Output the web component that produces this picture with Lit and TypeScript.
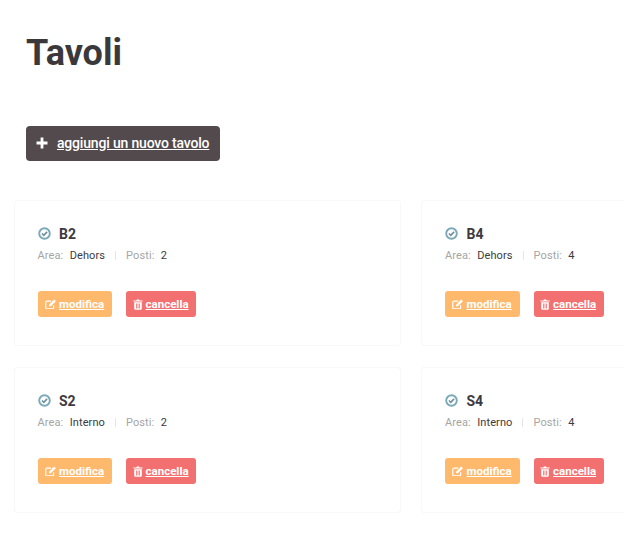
import { LitElement, html, css, svg } from "lit";
import { customElement } from "lit/decorators.js";

const tables = [
  { name: "B2", area: "Dehors", seats: 2 },
  { name: "B4", area: "Dehors", seats: 4 },
  { name: "S2", area: "Interno", seats: 2 },
  { name: "S4", area: "Interno", seats: 4 },
];

const checkIcon = svg`<svg class="check" viewBox="0 0 13 13" width="13" height="13" fill="none"><circle cx="6.5" cy="6.5" r="5.3" stroke="#7aa9b8" stroke-width="1.9"/><path d="M3.9 6.5 5.8 8.3 9.1 4.9" stroke="#6d8f9c" stroke-width="1.6"/></svg>`;
const editIcon = svg`<svg viewBox="0 0 12 11" width="11.5" height="10.5" fill="none"><path d="M9 6.5V9.2A1.2 1.2 0 0 1 7.8 10.4H2A1.2 1.2 0 0 1 .8 9.2V3.4A1.2 1.2 0 0 1 2 2.2H6.5" stroke="#fff" stroke-width="1.2"/><path d="M4.2 5.9 9.6.6 11.4 2.4 6 7.7H4.2Z" fill="#fff"/></svg>`;
const trashIcon = svg`<svg viewBox="0 0 10 11" width="10" height="11" fill="#fff"><path d="M3.4 1.6 3.9.4H6.1L6.6 1.6H9.6V2.6H.4V1.6Z"/><path fill-rule="evenodd" d="M1.2 3.2H8.8V9.6A1.2 1.2 0 0 1 7.6 10.8H2.4A1.2 1.2 0 0 1 1.2 9.6ZM3 4.4V9.4H3.8V4.4ZM4.6 4.4V9.4H5.4V4.4ZM6.2 4.4V9.4H7V4.4Z"/></svg>`;
const plusIcon = svg`<svg viewBox="0 0 12 12" width="12" height="12" fill="#fff"><path d="M4.6 0.5H7.4V4.6H11.5V7.4H7.4V11.5H4.6V7.4H0.5V4.6H4.6Z"/></svg>`;

@customElement("app-root")
export class AppRoot extends LitElement {
  static styles = css`
    :host {
      display: block;
      width: 624px;
      height: 542px;
      overflow: hidden;
      background: #fff;
      font-family: Roboto, "Liberation Sans", sans-serif;
      color: #3e3a3d;
    }
    .page {
      padding: 30px 0 0 13.6px;
    }
    h1 {
      margin: 0 0 0 12.4px;
      font-size: 36px;
      line-height: 46px;
      font-weight: 700;
      color: #3b383b;
    }
    .add {
      display: flex;
      align-items: center;
      gap: 9px;
      height: 35px;
      margin: 50px 0 39px 12.4px;
      padding: 0 0 2px 10px;
      box-sizing: border-box;
      width: 194px;
      border-radius: 4px;
      background: #534a4d;
      color: #fff;
      font-size: 14px;
      font-weight: 500;
      letter-spacing: -0.18px;
      text-decoration: underline;
      white-space: nowrap;
    }
    .add svg {
      flex: none;
      margin-top: 1px;
    }
    .grid {
      display: grid;
      grid-template-columns: 387.5px 387.5px;
      column-gap: 20px;
      row-gap: 21px;
      width: 795px;
    }
    .card {
      box-sizing: border-box;
      height: 146px;
      padding: 23px 23px 0;
      border: 1px solid #f8f8f8;
      border-radius: 3px;
    }
    .title {
      display: flex;
      align-items: center;
      gap: 8.4px;
      height: 19px;
      font-size: 14px;
      font-weight: 700;
      color: #3e3a3d;
    }
    .meta {
      display: flex;
      align-items: center;
      height: 14px;
      margin-top: 5px;
      font-size: 11px;
      letter-spacing: 0.1px;
      color: #3e3a3d;
    }
    .label {
      color: #a5a5a5;
      margin-right: 6.3px;
    }
    .sep {
      width: 1px;
      height: 9px;
      margin: 0 10px;
      background: #e6e4ee;
    }
    .actions {
      display: flex;
      gap: 14px;
      margin-top: 29px;
    }
    .btn {
      display: flex;
      align-items: center;
      justify-content: center;
      gap: 3px;
      height: 26px;
      padding-right: 1px;
      box-sizing: border-box;
      border-radius: 3px;
      color: #fff;
      font-size: 11.5px;
      font-weight: 700;
      text-decoration: underline;
    }
    .edit {
      width: 74.5px;
      background: #ffb96c;
    }
    .del {
      width: 70px;
      background: #f27070;
    }
  `;

  render() {
    return html`
      <div class="page">
        <h1>Tavoli</h1>
        <div class="add">${plusIcon}<span>aggiungi un nuovo tavolo</span></div>
        <div class="grid">
          ${tables.map(
            (t) => html`
              <div class="card">
                <div class="title">${checkIcon}<span>${t.name}</span></div>
                <div class="meta">
                  <span class="label">Area:</span><span>${t.area}</span>
                  <span class="sep"></span>
                  <span class="label">Posti:</span><span>${t.seats}</span>
                </div>
                <div class="actions">
                  <div class="btn edit">${editIcon}<span>modifica</span></div>
                  <div class="btn del">${trashIcon}<span>cancella</span></div>
                </div>
              </div>
            `
          )}
        </div>
      </div>
    `;
  }
}
